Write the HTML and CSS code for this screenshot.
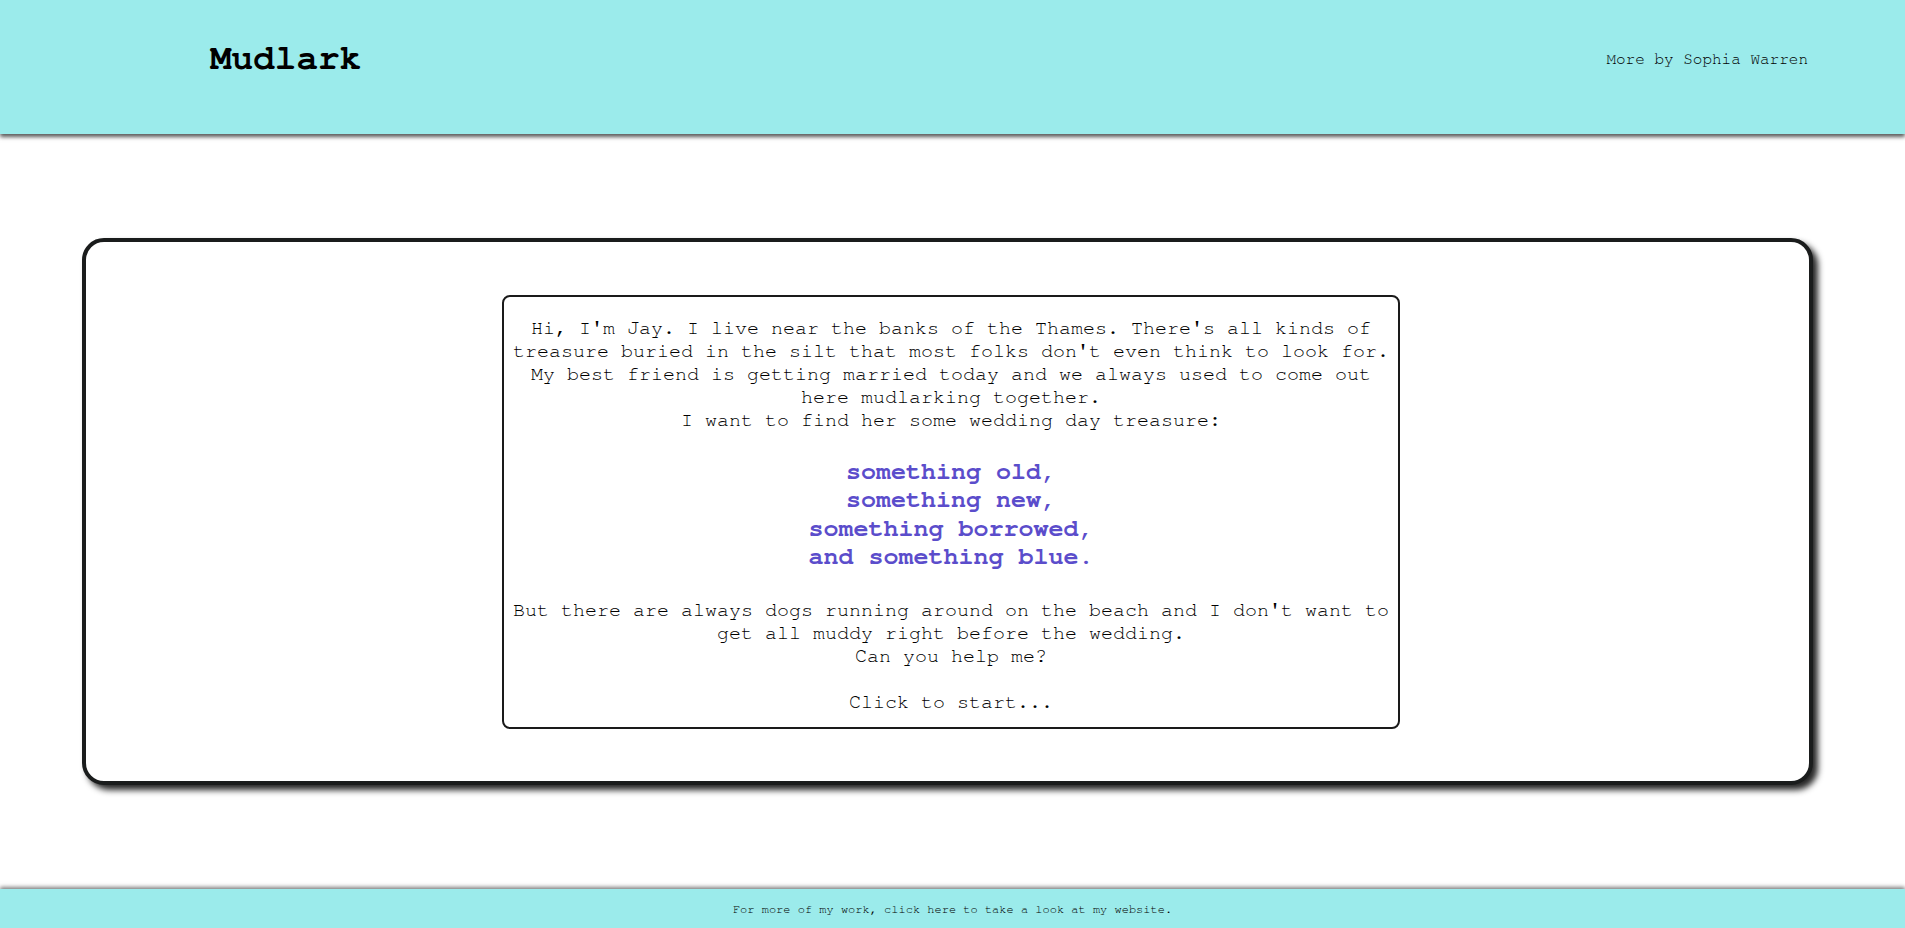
FILE: index.html
```html
<!DOCTYPE html>
<html lang="en">
<head>
<meta charset="utf-8">
<title>Mudlark</title>
<link rel="stylesheet" href="styles.css">
</head>
<body>
<header class="site-header">
  <h1 class="site-title">Mudlark</h1>
  <a class="more-link" href="#">More by Sophia Warren</a>
</header>
<main class="stage">
  <section class="card">
    <div class="intro">
      <p class="intro-text">Hi, I'm Jay. I live near the banks of the Thames. There's all kinds of<br>treasure buried in the silt that most folks don't even think to look for.<br>My best friend is getting married today and we always used to come out<br>here mudlarking together.<br>I want to find her some wedding day treasure:</p>
      <p class="treasure-list">something old,<br>something new,<br>something borrowed,<br>and something blue.</p>
      <p class="intro-text">But there are always dogs running around on the beach and I don't want to<br>get all muddy right before the wedding.<br>Can you help me?<br><br>Click to start...</p>
    </div>
  </section>
</main>
<footer class="site-footer">
  <span class="footer-text">For more of my work, click here to take a look at my website.</span>
</footer>
</body>
</html>
```

FILE: styles.css
```css
html, body {
  margin: 0;
  padding: 0;
}

body {
  font-family: "Nimbus Mono PS", "Nimbus Mono L", "FreeMono", "Courier", "Liberation Mono", monospace;
  color: #000;
  background: #ffffff;
  min-height: 100vh;
  display: flex;
  flex-direction: column;
}

.site-header {
  height: 134px;
  box-sizing: border-box;
  padding: 0 97px 17px 210px;
  background: #9bebeb;
  display: flex;
  align-items: center;
  justify-content: space-between;
  box-shadow: 0 3px 4px rgba(0, 0, 0, 0.65);
  position: relative;
  z-index: 1;
}

.site-title {
  margin: 0;
  font-size: 36px;
  font-weight: bold;
  color: #000;
  line-height: 41px;
}

.more-link {
  font-size: 16px;
  color: #000;
  text-decoration: none;
  line-height: 18px;
}

.stage {
  padding-top: 104px;
}

.card {
  box-sizing: border-box;
  margin: 0 92px 0 82px;
  border: 4px solid #1a1c1c;
  border-radius: 22px;
  box-shadow: 5px 5px 6px rgba(0, 0, 0, 0.85);
  padding: 53px 0 52px 7px;
  display: flex;
  justify-content: center;
  background: #fff;
}

.intro {
  width: 898px;
  box-sizing: border-box;
  border: 2px solid #1a1a1a;
  border-radius: 8px;
  padding: 20px 8px 13px;
  text-align: center;
}

.intro-text {
  margin: 0;
  font-size: 20px;
  line-height: 23px;
  color: #000;
}

.treasure-list {
  margin: 26px 0 28px;
  font-size: 25px;
  line-height: 28.3px;
  font-weight: bold;
  color: #5b4dcb;
}

.site-footer {
  margin-top: auto;
  height: 39px;
  background: #9bebeb;
  box-shadow: 0 -2px 4px rgba(0, 0, 0, 0.5);
  display: flex;
  align-items: center;
  justify-content: center;
}

.footer-text {
  font-size: 12px;
  line-height: 14px;
  color: #000;
}
```
